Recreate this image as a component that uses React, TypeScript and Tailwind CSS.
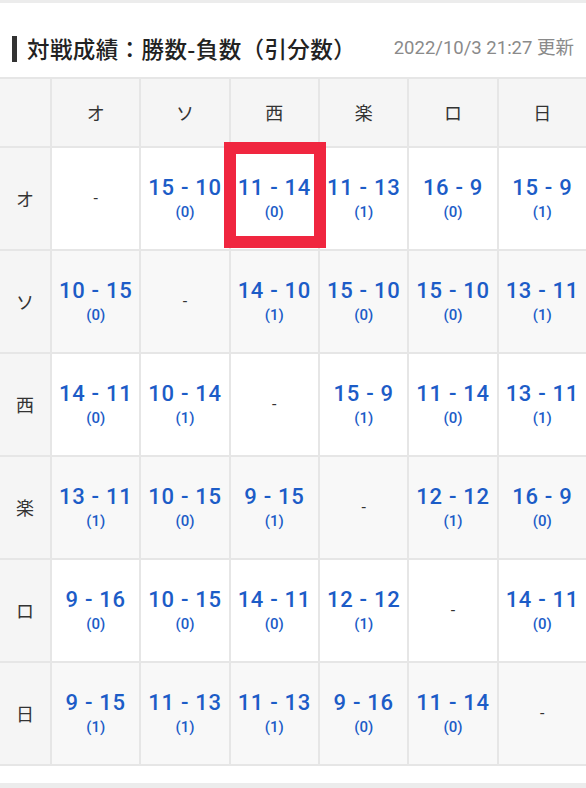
const teams = ['オ', 'ソ', '西', '楽', 'ロ', '日']

// [win, lose, draw] per row team vs column team; null = same team
type Rec = [number, number, number] | null

const results: Rec[][] = [
  [null, [15, 10, 0], [11, 14, 0], [11, 13, 1], [16, 9, 0], [15, 9, 1]],
  [[10, 15, 0], null, [14, 10, 1], [15, 10, 0], [15, 10, 0], [13, 11, 1]],
  [[14, 11, 0], [10, 14, 1], null, [15, 9, 1], [11, 14, 0], [13, 11, 1]],
  [[13, 11, 1], [10, 15, 0], [9, 15, 1], null, [12, 12, 1], [16, 9, 0]],
  [[9, 16, 0], [10, 15, 0], [14, 11, 0], [12, 12, 1], null, [14, 11, 0]],
  [[9, 15, 1], [11, 13, 1], [11, 13, 1], [9, 16, 0], [11, 14, 0], null],
]

const jp = "font-['Noto_Sans_CJK_JP',sans-serif]"

function Cell({ rec, shaded, marked }: { rec: Rec; shaded: boolean; marked: boolean }) {
  return (
    <div className={`relative flex flex-col items-center justify-center h-[101px] ${shaded ? 'bg-[#f8f8f8]' : 'bg-white'}`}>
      {rec ? (
        <>
          <span className="font-['Roboto',sans-serif] font-medium text-[22px] leading-none tracking-[0.7px] text-[#1c5cc7] whitespace-nowrap">
            {rec[0]} - {rec[1]}
          </span>
          <span className="font-['Roboto',sans-serif] font-medium text-[15px] leading-none mt-[6px] text-[#1c5cc7]">
            ({rec[2]})
          </span>
        </>
      ) : (
        <span className="font-['Roboto',sans-serif] text-[16px] text-[#333]">-</span>
      )}
      {marked && (
        <div className="absolute left-[-7px] top-[-6px] w-[102px] h-[106px] border-[12px] border-[#f0263f] z-10" />
      )}
    </div>
  )
}

export default function App() {
  return (
    <div className="w-[586px] h-[788px] bg-white flex flex-col overflow-hidden">
      <div className="h-[3px] bg-[#ececec]" />

      {/* Title */}
      <div className="flex items-center h-[74px] pl-[12px] pr-[12px] pt-[18px]">
        <div className="w-[5px] h-[26px] bg-[#333]" />
        <h1 className={`${jp} ml-[10px] text-[22.5px] font-medium text-[#222] tracking-[0.4px]`}>
          対戦成績：勝数-負数（引分数）
        </h1>
        <span className={`ml-auto font-['Roboto','Noto_Sans_CJK_JP',sans-serif] text-[18.5px] text-[#8a8a8a]`}>
          2022/10/3 21:27 更新
        </span>
      </div>

      {/* Matrix */}
      <div className="grid grid-cols-[50px_repeat(6,1fr)] gap-[2px] bg-[#e6e6e6] border-y-2 border-[#e6e6e6]">
        <div className="h-[67px] bg-[#f5f5f5]" />
        {teams.map((t) => (
          <div key={t} className={`${jp} h-[67px] bg-[#f5f5f5] flex items-center justify-center text-[18px] text-[#333]`}>
            {t}
          </div>
        ))}
        {teams.map((t, r) => (
          <>
            <div key={`l-${t}`} className={`${jp} h-[101px] bg-[#f5f5f5] flex items-center justify-center text-[18px] text-[#333]`}>
              {t}
            </div>
            {results[r].map((rec, c) => (
              <Cell key={`${r}-${c}`} rec={rec} shaded={r % 2 === 1} marked={r === 0 && c === 2} />
            ))}
          </>
        ))}
      </div>

      <div className="flex-1" />
      <div className="h-[5px] bg-[#ececec]" />
    </div>
  )
}
